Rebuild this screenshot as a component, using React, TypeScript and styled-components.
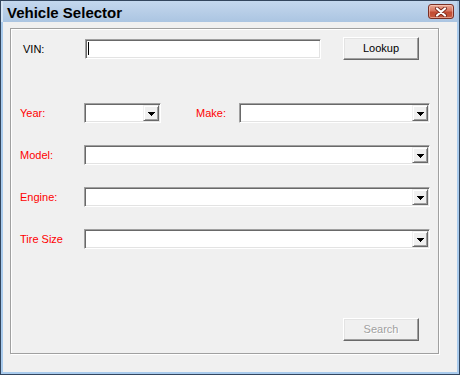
import React from "react";
import styled, { createGlobalStyle } from "styled-components";

const Global = createGlobalStyle`
  html, body { margin: 0; padding: 0; background: #ffffff; }
  body { font-family: "Liberation Sans", Arial, sans-serif; font-size: 11px; }
  * { box-sizing: border-box; }
`;

const Window = styled.div`
  width: 460px;
  height: 375px;
  border: 1px solid #33465e;
  display: flex;
  flex-direction: column;
  background: #f0f0f0;
`;

const TitleBar = styled.div`
  height: 21px;
  flex: none;
  display: flex;
  align-items: center;
  justify-content: space-between;
  padding: 0 4px 0 6px;
  background: linear-gradient(#c4d8ee 0%, #b9cfe8 45%, #abc5e2 100%);
  border-left: 2px solid #d7e6f5;
  border-right: 2px solid #a8c4e2;
`;

const Title = styled.div`
  font-family: "Liberation Sans", Arial, sans-serif;
  font-weight: bold;
  font-size: 15px;
  color: #000;
  margin-left: -2px;
  padding-top: 1px;
`;

const CloseButton = styled.div`
  width: 26px;
  height: 15px;
  border: 1px solid #7a2f24;
  border-radius: 3px;
  background: linear-gradient(#e9a894 0%, #d77560 45%, #c14b33 55%, #c85a3e 100%);
  display: flex;
  align-items: center;
  justify-content: center;
  box-shadow: inset 0 0 0 1px rgba(255, 220, 210, 0.5);
  margin-right: -1px;
`;

const Client = styled.div`
  flex: 1;
  display: flex;
  flex-direction: column;
  border: 2px solid #a9cbed;
  border-top: none;
  padding: 6px 18px 18px 7px;
  background: #f0f0f0;
`;

const GroupBox = styled.div`
  flex: 1;
  display: flex;
  flex-direction: column;
  border: 1px solid #a0a0a0;
  box-shadow: inset 1px 1px 0 #ffffff, 1px 1px 0 #ffffff;
`;

const Row = styled.div<{ $top: number; $height: number }>`
  display: flex;
  align-items: center;
  margin-top: ${(p) => p.$top}px;
  height: ${(p) => p.$height}px;
`;

const Label = styled.div<{ $left: number; $width: number; $red?: boolean }>`
  margin-left: ${(p) => p.$left}px;
  width: ${(p) => p.$width}px;
  flex: none;
  color: ${(p) => (p.$red ? "#ff0000" : "#000000")};
  font-size: 11px;
  white-space: nowrap;
`;

const Sunken = styled.div<{ $width: number }>`
  width: ${(p) => p.$width}px;
  height: 20px;
  flex: none;
  background: #ffffff;
  border: 1px solid;
  border-color: #a0a0a0 #ffffff #ffffff #a0a0a0;
  box-shadow: inset 1px 1px 0 #696969, inset -1px -1px 0 #e3e3e3;
  display: flex;
  align-items: center;
  justify-content: flex-end;
  padding: 1px;
`;

const TextBox = styled(Sunken)`
  justify-content: flex-start;
  padding-left: 2px;
`;

const Caret = styled.div`
  width: 1px;
  height: 13px;
  background: #000;
`;

const DropButton = styled.div`
  width: 16px;
  height: 16px;
  background: #f0f0f0;
  border: 1px solid;
  border-color: #f0f0f0 #696969 #696969 #f0f0f0;
  box-shadow: inset 1px 1px 0 #ffffff, inset -1px -1px 0 #a0a0a0;
  display: flex;
  align-items: center;
  justify-content: center;
  padding-top: 1px;
`;

const Button = styled.div<{ $left?: number; $disabled?: boolean }>`
  width: 76px;
  height: 23px;
  flex: none;
  margin-left: ${(p) => p.$left ?? 0}px;
  background: #f0f0f0;
  border: 1px solid;
  border-color: #ffffff #696969 #696969 #ffffff;
  box-shadow: inset -1px -1px 0 #a0a0a0, inset 1px 1px 0 #e3e3e3;
  display: flex;
  align-items: center;
  justify-content: center;
  font-size: 11px;
  color: ${(p) => (p.$disabled ? "#a0a0a0" : "#000000")};
  text-shadow: ${(p) => (p.$disabled ? "1px 1px 0 #ffffff" : "none")};
  padding-bottom: 1px;
`;

const Footer = styled.div`
  margin-top: auto;
  display: flex;
  justify-content: flex-end;
  padding-right: 19px;
  margin-bottom: 12px;
`;

const Arrow = () => (
  <svg width="7" height="4" viewBox="0 0 7 4" shapeRendering="crispEdges">
    <rect x="0" y="0" width="7" height="1" fill="#000" />
    <rect x="1" y="1" width="5" height="1" fill="#000" />
    <rect x="2" y="2" width="3" height="1" fill="#000" />
    <rect x="3" y="3" width="1" height="1" fill="#000" />
  </svg>
);

const Combo = ({ width }: { width: number }) => (
  <Sunken $width={width}>
    <DropButton>
      <Arrow />
    </DropButton>
  </Sunken>
);

const CloseX = () => (
  <svg width="14" height="10" viewBox="0 0 14 10">
    <path d="M3 1.5 L11 8.5 M11 1.5 L3 8.5" stroke="#7a2a1f" strokeWidth="4" strokeLinecap="round" />
    <path d="M3 1.5 L11 8.5 M11 1.5 L3 8.5" stroke="#ffffff" strokeWidth="2.2" strokeLinecap="round" />
  </svg>
);

export default function App() {
  return (
    <>
      <Global />
      <Window>
        <TitleBar>
          <Title>Vehicle Selector</Title>
          <CloseButton>
            <CloseX />
          </CloseButton>
        </TitleBar>
        <Client>
          <GroupBox>
            <Row $top={8} $height={23}>
              <Label $left={12} $width={62}>VIN:</Label>
              <TextBox $width={236}>
                <Caret />
              </TextBox>
              <Button $left={22}>Lookup</Button>
            </Row>
            <Row $top={43} $height={20}>
              <Label $left={9} $width={64} $red>Year:</Label>
              <Combo width={77} />
              <Label $left={35} $width={43} $red>Make:</Label>
              <Combo width={191} />
            </Row>
            <Row $top={22} $height={20}>
              <Label $left={9} $width={64} $red>Model:</Label>
              <Combo width={346} />
            </Row>
            <Row $top={22} $height={20}>
              <Label $left={9} $width={64} $red>Engine:</Label>
              <Combo width={346} />
            </Row>
            <Row $top={22} $height={20}>
              <Label $left={9} $width={64} $red>Tire Size</Label>
              <Combo width={346} />
            </Row>
            <Footer>
              <Button $disabled>Search</Button>
            </Footer>
          </GroupBox>
        </Client>
      </Window>
    </>
  );
}
